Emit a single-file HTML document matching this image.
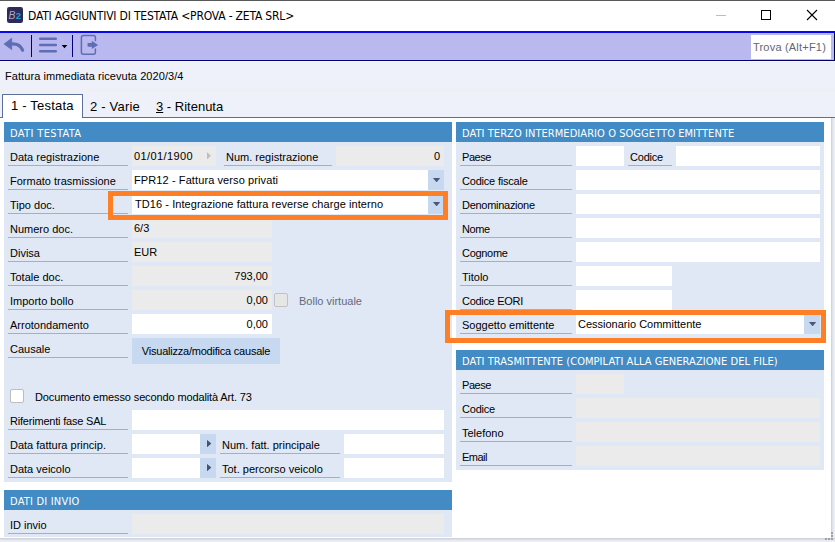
<!DOCTYPE html>
<html lang="it">
<head>
<meta charset="utf-8">
<title>DATI AGGIUNTIVI DI TESTATA</title>
<style>
html,body{margin:0;padding:0;}
body{width:835px;height:542px;position:relative;overflow:hidden;background:#fff;
  font-family:"Liberation Sans",Arial,sans-serif;font-size:11px;color:#000;}
.a{position:absolute;box-sizing:border-box;white-space:nowrap;}
.titletxt{left:28px;top:8px;height:16px;line-height:16px;font-family:"DejaVu Sans Condensed","Liberation Sans",sans-serif;font-size:12px;letter-spacing:-0.19px;color:#000;}
.hdr{background:#428bc4;color:#fff;height:20px;line-height:20px;padding-left:6px;padding-top:2px;font-family:"DejaVu Sans Condensed","Liberation Sans",sans-serif;font-size:11px;}
.panel{background:#dfe8f4;}
.lbl{height:20px;line-height:20px;padding-top:1px;padding-left:2px;border-bottom:1px solid #95b3d7;color:#000;}
.inp{height:20px;line-height:20px;padding-top:0px;padding-left:2px;background:#fff;color:#000;}
.dis{background:#ebebeb;}
.num{text-align:right;padding-right:4px;}
.dd{width:16px;height:20px;background:#c6d9f1;}
.dd:after{content:"";position:absolute;left:4.7px;top:7.8px;width:7.8px;height:4.5px;background:#4f5678;clip-path:polygon(0 0,100% 0,50% 100%);}
.da{width:16px;height:20px;background:#c6d9f1;}
.da:after{content:"";position:absolute;left:6.8px;top:5.7px;width:4.6px;height:7.8px;background:#4a5070;clip-path:polygon(0 0,100% 50%,0 100%);}
.orange{border:5px solid #ff7f27;z-index:5;}
</style>
</head>
<body>
<!-- title bar -->
<div class="a" style="left:0;top:0;width:835px;height:1px;background:#5a5a5a"></div>
<svg class="a" style="left:7px;top:7px" width="16" height="16" viewBox="0 0 16 16">
  <rect x="0" y="0" width="16" height="16" rx="2.2" fill="#2e2b58"/>
  <text x="1.6" y="11.8" font-family="Liberation Sans, sans-serif" font-size="10.3" font-style="italic" fill="#c4c4d8" fill-opacity="0.85">B</text>
  <text x="8.7" y="11.8" font-family="Liberation Sans, sans-serif" font-size="9.6" font-weight="bold" fill="#1e9fe0">2</text>
</svg>
<div class="a titletxt">DATI AGGIUNTIVI DI TESTATA &lt;PROVA - ZETA SRL&gt;</div>
<div class="a" style="left:716px;top:15px;width:10px;height:1px;background:#bdbdbd"></div>
<div class="a" style="left:761px;top:10px;width:10px;height:10px;border:1px solid #000"></div>
<svg class="a" style="left:806px;top:9px" width="12" height="12" viewBox="0 0 12 12"><path d="M1 1 L11 11 M11 1 L1 11" stroke="#000" stroke-width="1.1" fill="none"/></svg>

<!-- toolbar -->
<div class="a" style="left:0;top:31px;width:835px;height:2px;background:#0808f0"></div>
<div class="a" style="left:0;top:33px;width:835px;height:27px;background:#b9b9f0"></div>
<div class="a" style="left:0;top:60px;width:835px;height:1px;background:#00006e"></div>
<div class="a" style="left:834px;top:33px;width:1px;height:28px;background:#00004a"></div>
<!-- back arrow -->
<svg class="a" style="left:0px;top:33px" width="28" height="26" viewBox="0 0 28 26">
  <path d="M3.9 11.1 L11.8 5.1 L11.8 16.8 Z" fill="#5f6db6" stroke="#5f6db6" stroke-width="0.5" stroke-linejoin="round"/>
  <path d="M11.5 10.9 C16 10.7 20.5 11.8 22.6 17.2" fill="none" stroke="#5f6db6" stroke-width="3.3" stroke-linecap="round"/>
</svg>
<div class="a" style="left:31px;top:35px;width:1px;height:22px;background:#00007a"></div>
<svg class="a" style="left:36px;top:33px" width="34" height="26" viewBox="0 0 34 26">
  <path d="M4.2 5.65 H19.8 M4.2 11.9 H19.8 M4.2 18.15 H19.8" stroke="#5f6db6" stroke-width="2.5" stroke-linecap="round" fill="none"/>
  <path d="M25.7 12 L31.3 12 L28.5 15.2 Z" fill="#000"/>
</svg>
<div class="a" style="left:72px;top:35px;width:1px;height:22px;background:#00007a"></div>
<!-- exit icon -->
<svg class="a" style="left:80px;top:34px" width="20" height="22" viewBox="0 0 20 22">
  <path d="M15.4 6.4 L15.4 3.55 Q15.4 1.55 13.4 1.55 L3.4 1.55 Q1.4 1.55 1.4 3.55 L1.4 18.2 Q1.4 20.2 3.4 20.2 L13.4 20.2 Q15.4 20.2 15.4 18.2 L15.4 15.1" stroke="#5f6db6" stroke-width="1.5" stroke-linecap="round" fill="none"/>
  <path d="M7.6 8.9 L11.8 8.9 L11.8 6.8 L18.1 10.9 L11.8 14.9 L11.8 12.8 L7.6 12.8 Z" fill="#5f6db6"/>
</svg>
<div class="a" style="left:751px;top:35px;width:80px;height:24px;background:#fff;line-height:24px;padding-left:2px;letter-spacing:0.2px;color:#62667c">Trova (Alt+F1)</div>

<!-- background below toolbar -->
<div class="a" style="left:0;top:61px;width:835px;height:57px;background:#eef1f9"></div>
<div class="a" style="left:0;top:61px;width:835px;height:1px;background:#f8f9fd"></div>
<div class="a" style="left:0;top:89px;width:835px;height:3px;background:#f0f0f1"></div>
<div class="a" style="left:5px;top:69px;height:14px;line-height:14px;letter-spacing:0.07px">Fattura immediata ricevuta 2020/3/4</div>

<!-- tabs -->
<div class="a" style="left:0;top:117px;width:835px;height:1px;background:#5c6f96"></div>
<div class="a" style="left:2px;top:94px;width:81px;height:24px;background:#fff;border:1px solid #5c6f96;border-bottom:none"></div>
<div class="a" style="left:11px;top:98px;height:16px;line-height:16px;font-size:13px;letter-spacing:0.2px">1 - Testata</div>
<div class="a" style="left:90px;top:99px;height:16px;line-height:16px;font-size:13px;letter-spacing:0.2px">2 - Varie</div>
<div class="a" style="left:156px;top:99px;height:16px;line-height:16px;font-size:13px"><span style="text-decoration:underline">3</span> - Ritenuta</div>

<!-- LEFT PANEL: DATI TESTATA -->
<div class="a panel" style="left:4px;top:122px;width:448px;height:360px"></div>
<div class="a hdr" style="left:4px;top:122px;width:448px;letter-spacing:0.36px">DATI TESTATA</div>

<div class="a lbl" style="left:8px;top:146px;width:120px">Data registrazione</div>
<div class="a inp dis" style="left:132px;top:146px;width:84px;letter-spacing:0.4px">01/01/1900</div>
<div class="a" style="left:206.9px;top:152px;width:4px;height:7.4px;background:#bdbdbd;clip-path:polygon(0 0,100% 50%,0 100%)"></div>
<div class="a lbl" style="left:224px;top:146px;width:108px">Num. registrazione</div>
<div class="a inp dis num" style="left:336px;top:146px;width:108px">0</div>

<div class="a lbl" style="left:8px;top:170px;width:120px">Formato trasmissione</div>
<div class="a inp" style="left:132px;top:170px;width:296px;letter-spacing:0.1px">FPR12 - Fattura verso privati</div>
<div class="a dd" style="left:428px;top:170px"></div>

<div class="a lbl" style="left:8px;top:194px;width:120px">Tipo doc.</div>
<div class="a inp" style="left:132px;top:194px;width:296px;padding-left:3px;letter-spacing:0.07px">TD16 - Integrazione fattura reverse charge interno</div>
<div class="a dd" style="left:428px;top:194px"></div>
<div class="a orange" style="left:108px;top:191px;width:340px;height:29px"></div>

<div class="a lbl" style="left:8px;top:218px;width:120px">Numero doc.</div>
<div class="a inp dis" style="left:132px;top:218px;width:140px">6/3</div>

<div class="a lbl" style="left:8px;top:242px;width:120px">Divisa</div>
<div class="a inp dis" style="left:132px;top:242px;width:140px">EUR</div>

<div class="a lbl" style="left:8px;top:266px;width:120px">Totale doc.</div>
<div class="a inp dis num" style="left:132px;top:266px;width:140px">793,00</div>

<div class="a lbl" style="left:8px;top:290px;width:120px">Importo bollo</div>
<div class="a inp dis num" style="left:132px;top:290px;width:140px">0,00</div>
<div class="a" style="left:274px;top:293px;width:14px;height:14px;background:#e6e6e6;border:1px solid #c2c2c2;border-radius:2px"></div>
<div class="a" style="left:299px;top:290px;height:20px;line-height:20px;padding-top:1px;color:#666a7c">Bollo virtuale</div>

<div class="a lbl" style="left:8px;top:314px;width:120px">Arrotondamento</div>
<div class="a inp num" style="left:132px;top:314px;width:140px">0,00</div>

<div class="a lbl" style="left:8px;top:338px;width:120px">Causale</div>
<div class="a" style="left:132px;top:338px;width:148px;height:26px;line-height:26px;background:#c6d9f1;text-align:center;letter-spacing:-0.22px">Visualizza/modifica causale</div>

<div class="a" style="left:10px;top:389px;width:14px;height:14px;background:#fff;border:1px solid #bdbdbd;border-radius:2px"></div>
<div class="a" style="left:35px;top:386px;height:20px;line-height:20px;padding-top:1px;letter-spacing:-0.125px">Documento emesso secondo modalità Art. 73</div>

<div class="a lbl" style="left:8px;top:410px;width:120px;letter-spacing:-0.2px">Riferimenti fase SAL</div>
<div class="a inp" style="left:132px;top:410px;width:312px"></div>

<div class="a lbl" style="left:8px;top:434px;width:120px">Data fattura princip.</div>
<div class="a inp" style="left:132px;top:434px;width:68px"></div>
<div class="a da" style="left:200px;top:434px"></div>
<div class="a lbl" style="left:220px;top:434px;width:120px">Num. fatt. principale</div>
<div class="a inp" style="left:344px;top:434px;width:100px"></div>

<div class="a lbl" style="left:8px;top:458px;width:120px">Data veicolo</div>
<div class="a inp" style="left:132px;top:458px;width:68px"></div>
<div class="a da" style="left:200px;top:458px"></div>
<div class="a lbl" style="left:220px;top:458px;width:120px">Tot. percorso veicolo</div>
<div class="a inp" style="left:344px;top:458px;width:100px"></div>

<!-- LEFT PANEL 2: DATI DI INVIO -->
<div class="a panel" style="left:4px;top:490px;width:448px;height:47px"></div>
<div class="a hdr" style="left:4px;top:490px;width:448px;letter-spacing:0.2px">DATI DI INVIO</div>
<div class="a lbl" style="left:8px;top:514px;width:120px">ID invio</div>
<div class="a inp dis" style="left:132px;top:514px;width:312px"></div>

<!-- RIGHT PANEL 1 -->
<div class="a panel" style="left:456px;top:122px;width:368px;height:220px"></div>
<div class="a hdr" style="left:456px;top:122px;width:368px;letter-spacing:0.06px">DATI TERZO INTERMEDIARIO O SOGGETTO EMITTENTE</div>

<div class="a lbl" style="left:460px;top:146px;width:112px;letter-spacing:-0.45px">Paese</div>
<div class="a inp" style="left:576px;top:146px;width:48px"></div>
<div class="a lbl" style="left:628px;top:146px;width:44px;letter-spacing:-0.2px">Codice</div>
<div class="a inp" style="left:676px;top:146px;width:144px"></div>

<div class="a lbl" style="left:460px;top:170px;width:112px;letter-spacing:-0.2px">Codice fiscale</div>
<div class="a inp" style="left:576px;top:170px;width:244px"></div>

<div class="a lbl" style="left:460px;top:194px;width:112px;letter-spacing:-0.28px">Denominazione</div>
<div class="a inp" style="left:576px;top:194px;width:244px"></div>

<div class="a lbl" style="left:460px;top:218px;width:112px;letter-spacing:-0.4px">Nome</div>
<div class="a inp" style="left:576px;top:218px;width:244px"></div>

<div class="a lbl" style="left:460px;top:242px;width:112px;letter-spacing:-0.3px">Cognome</div>
<div class="a inp" style="left:576px;top:242px;width:244px"></div>

<div class="a lbl" style="left:460px;top:266px;width:112px">Titolo</div>
<div class="a inp" style="left:576px;top:266px;width:96px"></div>

<div class="a lbl" style="left:460px;top:290px;width:112px;letter-spacing:-0.3px">Codice EORI</div>
<div class="a inp" style="left:576px;top:290px;width:96px"></div>

<div class="a lbl" style="left:460px;top:314px;width:112px">Soggetto emittente</div>
<div class="a inp" style="left:576px;top:314px;width:228px">Cessionario Committente</div>
<div class="a dd" style="left:804px;top:314px"></div>
<div class="a orange" style="left:445px;top:310px;width:381px;height:33px"></div>

<!-- RIGHT PANEL 2 -->
<div class="a panel" style="left:456px;top:350px;width:368px;height:120px"></div>
<div class="a hdr" style="left:456px;top:350px;width:368px;letter-spacing:0.05px">DATI TRASMITTENTE (COMPILATI ALLA GENERAZIONE DEL FILE)</div>

<div class="a lbl" style="left:460px;top:374px;width:112px;letter-spacing:-0.45px">Paese</div>
<div class="a inp dis" style="left:576px;top:374px;width:48px"></div>
<div class="a lbl" style="left:460px;top:398px;width:112px;letter-spacing:-0.2px">Codice</div>
<div class="a inp dis" style="left:576px;top:398px;width:244px"></div>
<div class="a lbl" style="left:460px;top:422px;width:112px">Telefono</div>
<div class="a inp dis" style="left:576px;top:422px;width:244px"></div>
<div class="a lbl" style="left:460px;top:446px;width:112px;letter-spacing:-0.5px">Email</div>
<div class="a inp dis" style="left:576px;top:446px;width:244px"></div>

<!-- bottom / right edges of tab page -->
<div class="a" style="left:831px;top:118px;width:4px;height:424px;background:linear-gradient(90deg,#d2d4dc 0,#d2d4dc 25%,#dfe1e9 25%,#dfe1e9 50%,#e8eaf2 50%,#e8eaf2 75%,#eceef6 75%)"></div>
<div class="a" style="left:0;top:538px;width:835px;height:4px;background:linear-gradient(180deg,#d0d2d8 0,#d0d2d8 25%,#dddfe6 25%,#dddfe6 50%,#e7e9f0 50%,#e7e9f0 75%,#eceef6 75%)"></div>
<div class="a" style="left:831px;top:532px;width:2px;height:2px;background:#a0a0a0"></div>
<div class="a" style="left:831px;top:535px;width:2px;height:2px;background:#a0a0a0"></div>
<div class="a" style="left:831px;top:538px;width:2px;height:2px;background:#a0a0a0"></div>
<div class="a" style="left:828px;top:538px;width:2px;height:2px;background:#a0a0a0"></div>
<div class="a" style="left:825px;top:538px;width:2px;height:2px;background:#a0a0a0"></div>
</body>
</html>
